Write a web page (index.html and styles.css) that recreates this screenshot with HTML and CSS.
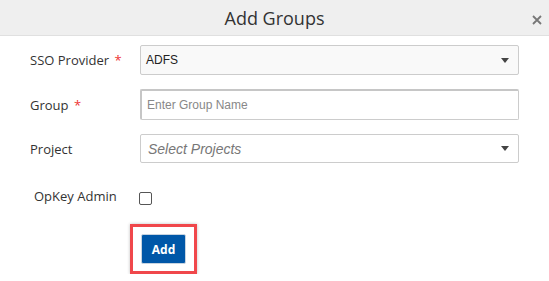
FILE: index.html
```html
<!DOCTYPE html>
<html lang="en">
<head>
  <meta charset="UTF-8" />
  <title>Add Groups</title>
  <link rel="stylesheet" href="styles.css">
</head>
<body>
  <div class="modal">
    <div class="modal-header">
      <h2>Add Groups</h2>
      <svg class="close" width="10" height="10" viewBox="0 0 10 10">
        <path d="M1 1 L9 9 M9 1 L1 9" stroke="#777" stroke-width="1.8" />
      </svg>
    </div>

    <form class="modal-body">
      <div class="row">
        <label>SSO Provider <span class="req">*</span></label>
        <div class="select">
          <span class="value">ADFS</span>
          <span class="caret"></span>
        </div>
      </div>

      <div class="row">
        <label>Group <span class="req">*</span></label>
        <input type="text" class="text" placeholder="Enter Group Name" />
      </div>

      <div class="row">
        <label>Project</label>
        <div class="select select-empty">
          <span class="value">Select Projects</span>
          <span class="caret"></span>
        </div>
      </div>

      <div class="row row-check">
        <label>OpKey Admin</label>
        <span class="checkbox"></span>
      </div>

      <div class="actions">
        <div class="highlight">
          <button type="button">Add</button>
        </div>
      </div>
    </form>
  </div>
</body>
</html>
```

FILE: styles.css
```css
body {
  margin: 0;
  background: white;
  color: #333;
  font-family: "Open Sans", sans-serif;
}

.modal-header {
  height: 35px;
  background: #efefef;
  border-bottom: 1px solid #e0e0e0;
  display: flex;
  align-items: center;
  justify-content: center;
  position: relative;
}

.modal-header h2 {
  margin: 0;
  font-size: 18px;
  font-weight: normal;
  color: #333;
}

.close {
  position: absolute;
  right: 7px;
  top: 15px;
}

.modal-body {
  padding: 9px 30px 0 30px;
}

.row {
  display: flex;
  align-items: center;
  margin-bottom: 14px;
}

label {
  width: 110px;
  font-size: 13px;
  color: #333;
}

.req {
  color: #e33;
  margin-left: 2px;
}

.select {
  flex: 1;
  height: 30px;
  box-sizing: border-box;
  border: 1px solid #ccc;
  border-radius: 2px;
  background: #f9f9f9;
  display: flex;
  align-items: center;
  justify-content: space-between;
  padding: 0 9px 0 5px;
  font-family: "Liberation Sans", Arial, sans-serif;
  font-size: 12px;
  color: #222;
}

.select-empty {
  height: 29px;
  background: white;
  font-size: 14px;
  font-style: italic;
  color: #777;
  padding-left: 7px;
}

.caret {
  width: 0;
  height: 0;
  border-left: 4px solid transparent;
  border-right: 4px solid transparent;
  border-top: 5px solid #444;
}

.text {
  flex: 1;
  height: 31px;
  box-sizing: border-box;
  margin: 0;
  border: 1px solid #ccc;
  border-top: 2px solid #c6c6c6;
  border-left: 2px solid #c6c6c6;
  border-radius: 2px;
  padding: 0 5px;
  font-family: "Liberation Sans", Arial, sans-serif;
  font-size: 12px;
}

.text::placeholder {
  color: #888;
}

.row-check {
  margin-top: 24px;
  margin-bottom: 0;
  align-items: flex-start;
}

.row-check label {
  padding-left: 4px;
  width: 105px;
}

.checkbox {
  width: 11px;
  height: 11px;
  margin-top: 5px;
  border: 1px solid #555;
  border-radius: 2px;
}

.actions {
  padding-left: 100px;
  margin-top: 19px;
}

.highlight {
  display: inline-block;
  border: 3px solid #f0474b;
  padding: 7px 8px;
  box-shadow: 0 0 3px rgba(0,0,0,0.25);
}

button {
  display: block;
  width: 45px;
  height: 30px;
  border: 1px solid #c8d4e0;
  border-radius: 2px;
  background: #0057a8;
  color: white;
  font-family: "Open Sans", sans-serif;
  font-size: 12px;
  font-weight: bold;
  padding: 0;
}
```
